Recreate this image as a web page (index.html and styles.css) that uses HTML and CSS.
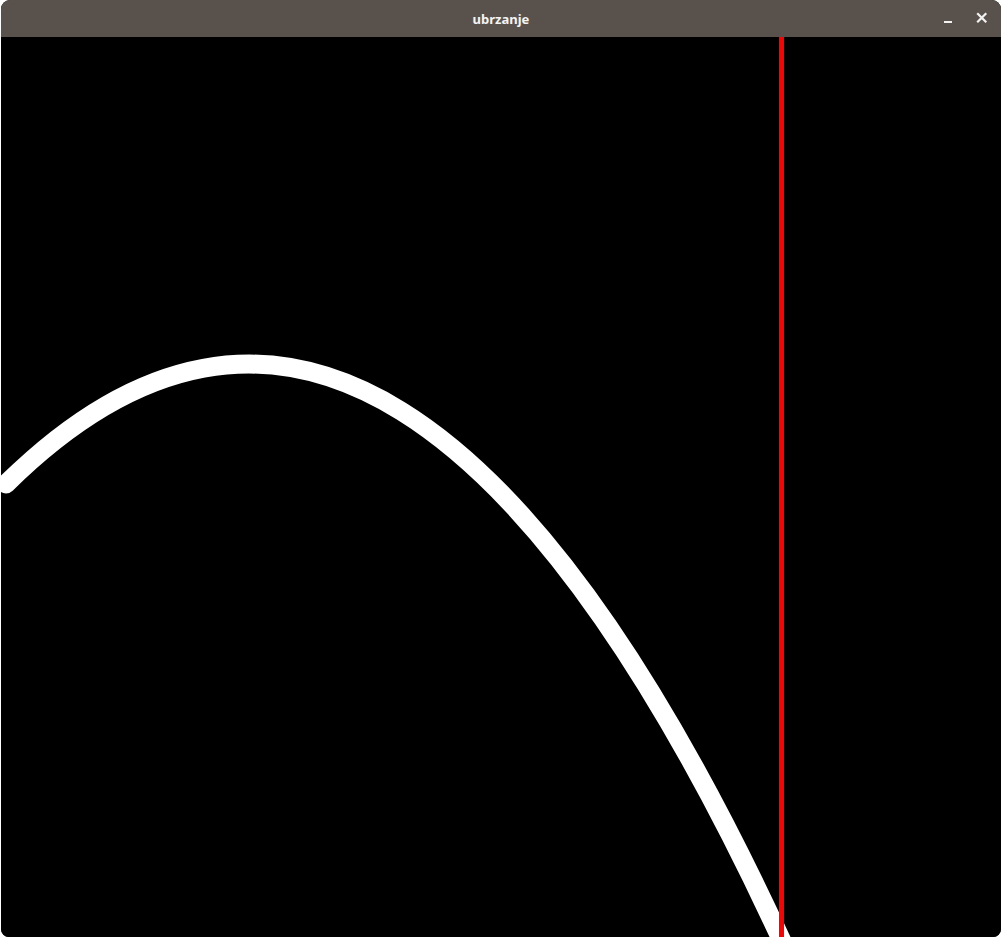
FILE: index.html
```html
<!DOCTYPE html>
<html>
<head>
<meta charset="utf-8">
<link rel="stylesheet" href="styles.css">
</head>
<body>
<div class="window">
  <div class="titlebar">
    <div class="title">ubrzanje</div>
    <div class="controls">
      <svg class="btn" width="14" height="14" viewBox="0 0 14 14"><rect x="2" y="10" width="8" height="2" fill="#f2f2f2"/></svg>
      <svg class="btn" width="14" height="14" viewBox="0 0 14 14"><path d="M3 3 L10.5 10.5 M10.5 3 L3 10.5" stroke="#f2f2f2" stroke-width="2.2" stroke-linecap="square"/></svg>
    </div>
  </div>
  <div class="canvas">
    <svg class="plot" width="1000" height="900" viewBox="0 0 1000 900">
      <path d="M5 447 Q400 57 795 935" fill="none" stroke="#ffffff" stroke-width="19" stroke-linecap="round"/>
      <rect x="778" y="0" width="5" height="900" fill="#ff0000"/>
    </svg>
  </div>
</div>
</body>
</html>
```
FILE: styles.css
```css
html, body {
  margin: 0;
  padding: 0;
  background: #ffffff;
}
body {
  padding-left: 1px;
}
.window {
  width: 1000px;
  height: 937px;
  display: flex;
  flex-direction: column;
  border-radius: 9px 9px 8px 8px;
  overflow: hidden;
  background: #000000;
}
.titlebar {
  height: 37px;
  flex: 0 0 37px;
  background: #59524c;
  position: relative;
  display: flex;
  align-items: center;
  justify-content: center;
}
.title {
  font-family: "Noto Sans", "DejaVu Sans", sans-serif;
  font-weight: bold;
  font-size: 13px;
  color: #f4f4f4;
}
.controls {
  position: absolute;
  right: 12px;
  top: 11px;
  display: flex;
  gap: 19px;
}
.btn {
  display: block;
}
.canvas {
  flex: 1;
  background: #000000;
  overflow: hidden;
}
.plot {
  display: block;
}
```
